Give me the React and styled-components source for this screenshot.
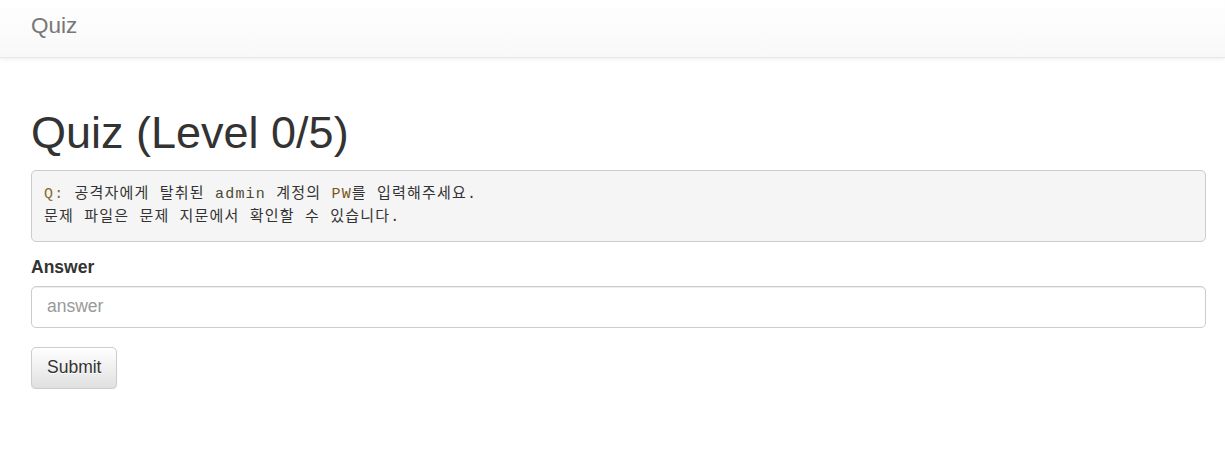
import React from "react";
import styled, { createGlobalStyle } from "styled-components";

const GlobalStyle = createGlobalStyle`
  * {
    box-sizing: border-box;
  }
  body {
    margin: 0;
    background: #fff;
    color: #333;
    font-family: "Liberation Sans", Arial, sans-serif;
    font-size: 17.5px;
    line-height: 1.42857;
  }
`;

const Navbar = styled.nav`
  height: 58px;
  display: flex;
  align-items: center;
  padding: 0 31px;
  background-image: linear-gradient(to bottom, #ffffff 0, #f8f8f8 100%);
  border-bottom: 1px solid #e7e7e7;
  box-shadow: inset 0 1px 0 rgba(255, 255, 255, 0.15), 0 1px 5px rgba(0, 0, 0, 0.075);
`;

const Brand = styled.a`
  font-size: 22.5px;
  line-height: 25px;
  color: #777;
  text-decoration: none;
  margin-top: -6px;
`;

const Container = styled.main`
  padding: 25px 19px 0 31px;
`;

const Title = styled.h1`
  margin: 25px 0 12.5px;
  font-size: 45px;
  font-weight: 500;
  line-height: 1.1;
  color: #333;
`;

const Question = styled.pre`
  margin: 0 0 12.5px;
  padding: 12px 12px 12px 12px;
  background: #f5f5f5;
  border: 1px solid #ccc;
  border-radius: 5px;
  font-family: "Liberation Mono", "Noto Sans CJK KR", monospace;
  font-size: 15px;
  letter-spacing: 1.2px;
  line-height: 23px;
  color: #333;
  white-space: pre-wrap;
`;

const Token = styled.span`
  color: ${(p) => p.$color};
`;

const FormGroup = styled.div`
  margin-bottom: 19px;
`;

const Label = styled.label`
  display: block;
  margin-bottom: 6px;
  font-weight: bold;
  line-height: 25px;
`;

const Input = styled.input`
  display: block;
  width: 100%;
  height: 42px;
  padding: 7.5px 15px;
  font-family: inherit;
  font-size: 17.5px;
  color: #555;
  background: #fff;
  border: 1px solid #ccc;
  border-radius: 5px;
  box-shadow: inset 0 1px 1px rgba(0, 0, 0, 0.075);
  outline: none;

  &::placeholder {
    color: #999;
  }
`;

const Button = styled.button`
  height: 42px;
  padding: 7.5px 15px;
  font-family: inherit;
  font-size: 17.5px;
  line-height: 1.42857;
  color: #333;
  background-image: linear-gradient(to bottom, #ffffff 0, #e0e0e0 100%);
  border: 1px solid #ccc;
  border-radius: 5px;
  text-shadow: 0 1px 0 #fff;
  box-shadow: inset 0 1px 0 rgba(255, 255, 255, 0.15), 0 1px 1px rgba(0, 0, 0, 0.075);
  cursor: pointer;
`;

export default function App() {
  return (
    <>
      <GlobalStyle />
      <Navbar>
        <Brand href="#">Quiz</Brand>
      </Navbar>
      <Container>
        <Title>Quiz (Level 0/5)</Title>
        <Question>
          <Token $color="#8a6a30">Q:</Token> 공격자에게 탈취된{" "}
          <Token $color="#4a4a30">admin</Token> 계정의{" "}
          <Token $color="#7a5424">PW</Token>를 입력해주세요.
          {"\n"}문제 파일은 문제 지문에서 확인할 수 있습니다.
        </Question>
        <form onSubmit={(e) => e.preventDefault()}>
          <FormGroup>
            <Label htmlFor="answer">Answer</Label>
            <Input id="answer" type="text" placeholder="answer" />
          </FormGroup>
          <Button type="submit">Submit</Button>
        </form>
      </Container>
    </>
  );
}
